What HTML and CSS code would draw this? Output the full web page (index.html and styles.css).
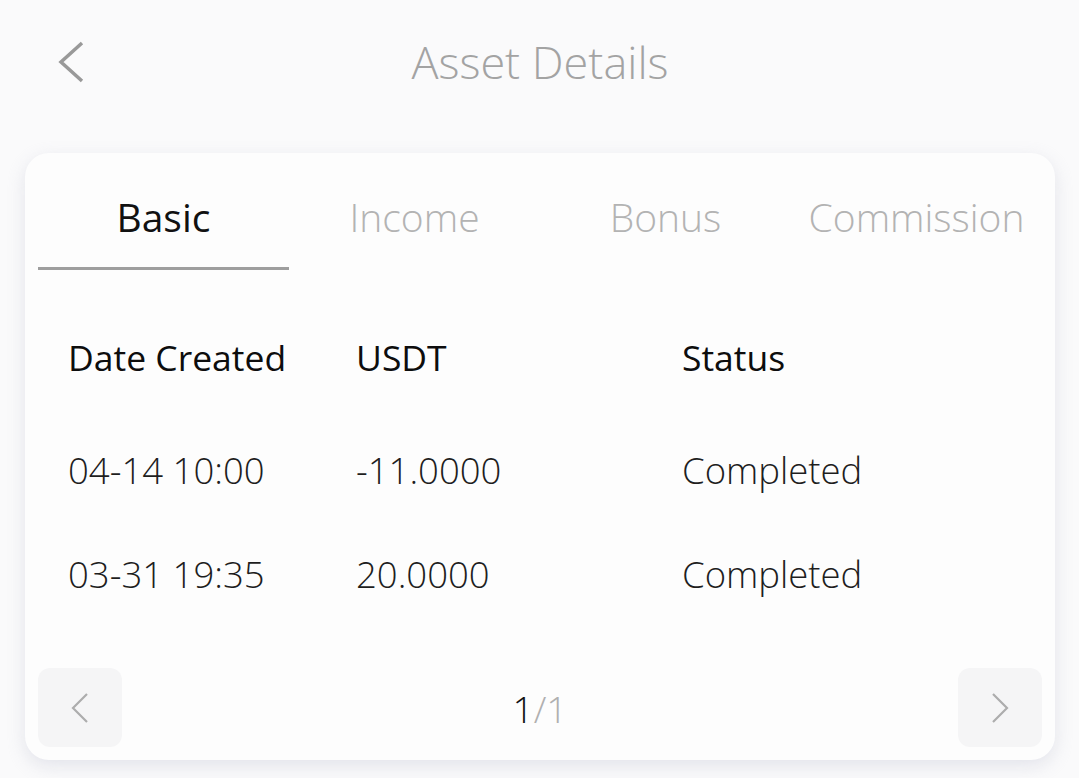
FILE: index.html
```html
<!DOCTYPE html>
<html lang="en">
<head>
<meta charset="utf-8">
<title>Asset Details</title>
<link rel="stylesheet" href="styles.css">
</head>
<body>
<div class="page">
  <header class="topbar">
    <button class="back" aria-label="Back">
      <svg width="30" height="44" viewBox="0 0 30 44"><path d="M26 3 L5 22 L26 41" fill="none" stroke="#999" stroke-width="3.5" stroke-linejoin="miter"/></svg>
    </button>
    <h1 class="title">Asset Details</h1>
  </header>

  <section class="card">
    <nav class="tabs">
      <div class="tab active">Basic</div>
      <div class="tab">Income</div>
      <div class="tab">Bonus</div>
      <div class="tab">Commission</div>
    </nav>

    <div class="table">
      <div class="row head">
        <div>Date Created</div>
        <div>USDT</div>
        <div>Status</div>
      </div>
      <div class="row">
        <div>04-14 10:00</div>
        <div>-11.0000</div>
        <div>Completed</div>
      </div>
      <div class="row">
        <div>03-31 19:35</div>
        <div>20.0000</div>
        <div>Completed</div>
      </div>
    </div>

    <div class="pager">
      <button class="pbtn" aria-label="Previous">
        <svg width="20" height="32" viewBox="0 0 20 32"><path d="M17 2 L3 16 L17 30" fill="none" stroke="#adadad" stroke-width="2.2"/></svg>
      </button>
      <div class="count"><span class="cur">1</span><span class="tot">/1</span></div>
      <button class="pbtn" aria-label="Next">
        <svg width="20" height="32" viewBox="0 0 20 32"><path d="M3 2 L17 16 L3 30" fill="none" stroke="#adadad" stroke-width="2.2"/></svg>
      </button>
    </div>
  </section>
</div>
</body>
</html>
```

FILE: styles.css
```css
* { box-sizing: border-box; }
html, body {
  margin: 0;
  padding: 0;
  background: #fafafb;
  font-family: "Open Sans", "Noto Sans", sans-serif;
}
.page {
  width: 1079px;
  height: 778px;
  padding: 0 24px 0 25px;
  overflow: hidden;
}
.topbar {
  height: 153px;
  display: flex;
  align-items: flex-start;
  justify-content: center;
  position: relative;
}
.back {
  position: absolute;
  left: 31px;
  top: 40px;
  background: none;
  border: 0;
  padding: 0;
  width: 30px;
  height: 44px;
}
.back svg { display: block; }
.title {
  margin: 0;
  margin-top: 30px;
  font-size: 45px;
  font-weight: 300;
  color: #a3a3a3;
  line-height: 64px;
  letter-spacing: 0;
}
.card {
  background: #fdfdfd;
  border-radius: 24px;
  box-shadow: 0 6px 18px rgba(200, 202, 215, 0.45);
  height: 607px;
  padding: 0 13px;
  display: flex;
  flex-direction: column;
}
.tabs {
  display: grid;
  grid-template-columns: repeat(4, 1fr);
  height: 117px;
}
.tab {
  font-size: 39px;
  font-weight: 300;
  color: #b3b3b3;
  text-align: center;
  padding-top: 37px;
  line-height: 54px;
  border-bottom: 3px solid transparent;
}
.tab.active {
  color: #111;
  font-weight: 400;
  border-bottom-color: #9e9e9e;
}
.table {
  padding: 0 30px;
  flex: 1;
}
.row {
  display: grid;
  grid-template-columns: 288px 326px 1fr;
  font-size: 36.5px;
  font-weight: 300;
  color: #1e1e1e;
  height: 104px;
  align-items: center;
}
.row.head {
  font-size: 35.5px;
  font-weight: 400;
  color: #0d0d0d;
  height: 148px;
  padding-top: 25px;
}
.pager {
  display: flex;
  justify-content: space-between;
  align-items: center;
  height: 79px;
  margin-bottom: 13px;
}
.pbtn {
  width: 84px;
  height: 79px;
  border: 0;
  border-radius: 12px;
  background: #f5f5f6;
  display: flex;
  align-items: center;
  justify-content: center;
  padding: 0;
}
.pbtn svg { display: block; }
.count {
  font-size: 37px;
  font-weight: 300;
  line-height: 50px;
  margin-top: 2px;
}
.cur { color: #111; }
.tot { color: #b0b0b0; }
```
